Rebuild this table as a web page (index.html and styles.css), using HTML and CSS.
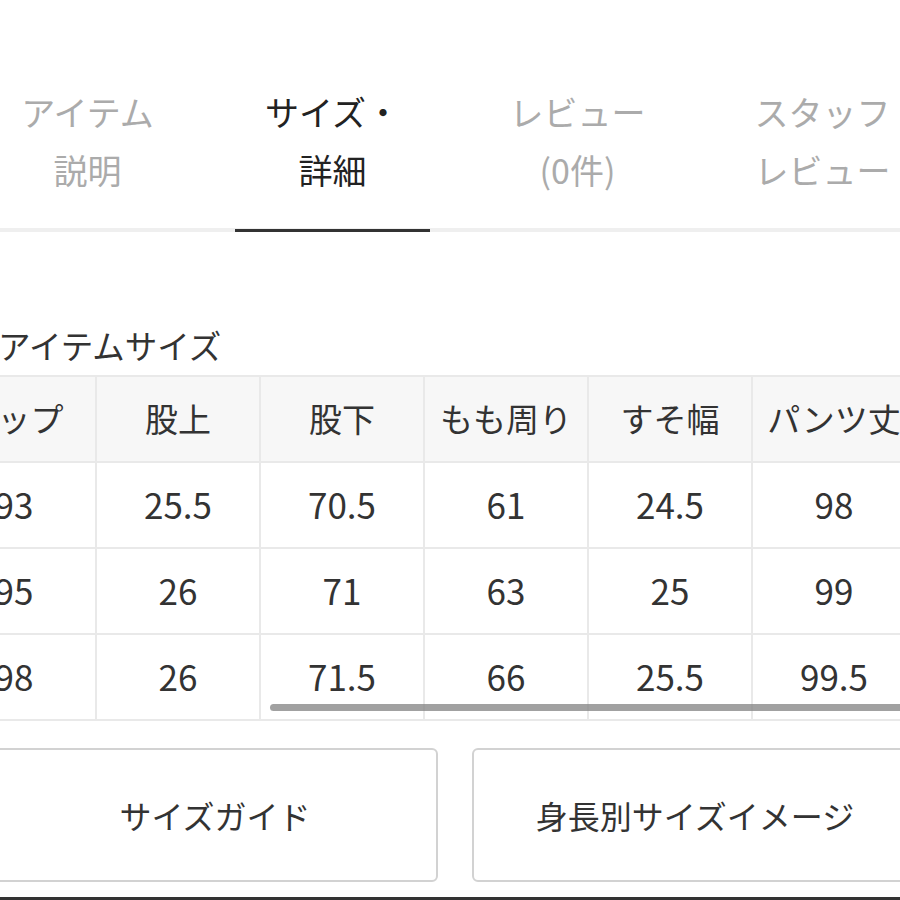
FILE: index.html
```html
<!DOCTYPE html>
<html lang="ja">
<head>
<meta charset="utf-8">
<title>サイズ・詳細</title>
<link rel="stylesheet" href="styles.css">
</head>
<body>
<div class="page">
  <nav class="tabs">
    <div class="tab">アイテム<br>説明</div>
    <div class="tab active">サイズ・<br>詳細</div>
    <div class="tab">レビュー<br>(0件)</div>
    <div class="tab">スタッフ<br>レビュー</div>
  </nav>

  <h2 class="heading">アイテムサイズ</h2>

  <div class="table-wrap">
    <table class="size-table">
      <thead>
        <tr><th>ヒップ</th><th>股上</th><th>股下</th><th>もも周り</th><th>すそ幅</th><th>パンツ丈</th></tr>
      </thead>
      <tbody>
        <tr><td>93</td><td>25.5</td><td>70.5</td><td>61</td><td>24.5</td><td>98</td></tr>
        <tr><td>95</td><td>26</td><td>71</td><td>63</td><td>25</td><td>99</td></tr>
        <tr><td>98</td><td>26</td><td>71.5</td><td>66</td><td>25.5</td><td>99.5</td></tr>
      </tbody>
    </table>
    <div class="scrollbar"></div>
  </div>

  <div class="buttons">
    <div class="btn">サイズガイド</div>
    <div class="btn">身長別サイズイメージ</div>
  </div>

  <div class="bottom-bar"></div>
</div>
</body>
</html>
```

FILE: styles.css
```css
html, body {
  margin: 0;
  padding: 0;
  background: #fff;
}
body {
  width: 900px;
  height: 900px;
  overflow: hidden;
  font-family: "Noto Sans CJK JP", "Noto Sans", sans-serif;
  color: #333;
}
.page {
  height: 900px;
  display: flex;
  flex-direction: column;
}
.tabs {
  display: flex;
  margin-left: -35px;
  padding-top: 83px;
  border-bottom: 4px solid #efefef;
}
.tab {
  position: relative;
  flex: 0 0 245px;
  text-align: center;
  font-size: 34px;
  line-height: 58px;
  padding-bottom: 29px;
  color: #ababab;
  white-space: nowrap;
}
.tab.active {
  color: #222;
}
.tab.active::after {
  content: "";
  position: absolute;
  left: 25px;
  right: 25px;
  bottom: -4px;
  height: 3px;
  background: #333;
}
.heading {
  margin: 91px 0 0 -2px;
  font-size: 32.5px;
  line-height: 44px;
  font-weight: normal;
  color: #333;
}
.table-wrap {
  position: relative;
  margin-top: 8px;
  margin-left: -69px;
}
.size-table {
  border-collapse: collapse;
  table-layout: fixed;
  width: 984px;
}
.size-table th,
.size-table td {
  width: 164px;
  height: 86px;
  padding: 0 0 3px;
  box-sizing: border-box;
  border: 2px solid #e9e9e9;
  text-align: center;
  font-size: 35px;
  font-weight: normal;
  color: #333;
  white-space: nowrap;
  overflow: hidden;
}
.size-table th {
  background: #f7f7f7;
  font-size: 33px;
  padding-bottom: 2px;
}
.scrollbar {
  position: absolute;
  left: 339px;
  top: 329px;
  width: 700px;
  height: 7px;
  border-radius: 4px;
  background: rgba(130, 130, 130, 0.75);
}
.buttons {
  display: flex;
  gap: 34px;
  margin-top: 27px;
  margin-left: -8px;
  width: 926px;
}
.btn {
  flex: 1;
  height: 134px;
  box-sizing: border-box;
  border: 2px solid #d2d2d2;
  border-radius: 6px;
  display: flex;
  align-items: center;
  justify-content: center;
  font-size: 32px;
  color: #333;
  white-space: nowrap;
}
.bottom-bar {
  margin-top: auto;
  height: 3px;
  background: #333;
}
```
